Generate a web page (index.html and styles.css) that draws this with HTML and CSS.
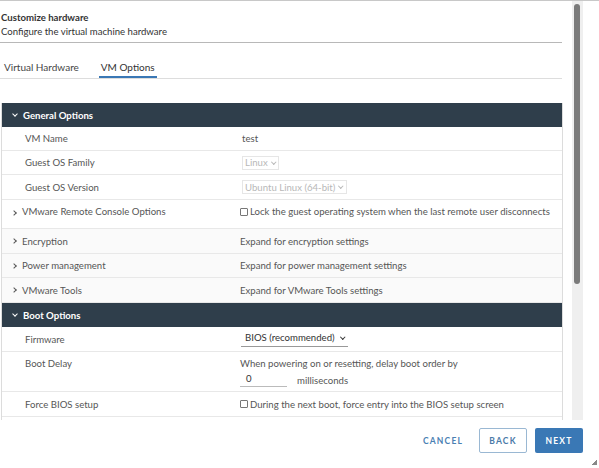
FILE: index.html
```html
<!DOCTYPE html>
<html>
<head>
<meta charset="utf-8">
<link rel="stylesheet" href="styles.css">
</head>
<body>
<div class="dialog">
  <div class="main">
    <div class="content">
      <div class="head">
        <div class="title">Customize hardware</div>
        <div class="subtitle">Configure the virtual machine hardware</div>
      </div>
      <div class="tabs">
        <div class="tab">Virtual Hardware</div>
        <div class="tab active">VM Options</div>
      </div>
      <div class="table">
        <div class="row section"><span class="chev down"></span>General Options</div>
        <div class="row h24"><div class="label sub">VM Name</div><div class="value"><span class="txt">test</span></div></div>
        <div class="row h24"><div class="label sub">Guest OS Family</div><div class="value"><span class="sel dis">Linux <span class="caret"></span></span></div></div>
        <div class="row h25"><div class="label sub">Guest OS Version</div><div class="value"><span class="sel dis">Ubuntu Linux (64-bit) <span class="caret"></span></span></div></div>
        <div class="row h29 top"><div class="label"><span class="chev right"></span>VMware Remote Console Options</div><div class="value"><span class="cb"></span>Lock the guest operating system when the last remote user disconnects</div></div>
        <div class="row h25 alt"><div class="label"><span class="chev right"></span>Encryption</div><div class="value">Expand for encryption settings</div></div>
        <div class="row h24 alt"><div class="label"><span class="chev right"></span>Power management</div><div class="value">Expand for power management settings</div></div>
        <div class="row h25 alt"><div class="label"><span class="chev right"></span>VMware Tools</div><div class="value">Expand for VMware Tools settings</div></div>
        <div class="row section"><span class="chev down"></span>Boot Options</div>
        <div class="row h25"><div class="label sub">Firmware</div><div class="value"><span class="sel line">BIOS (recommended) <span class="caret dark"></span></span></div></div>
        <div class="row delay"><div class="label sub">Boot Delay</div><div class="value col"><div>When powering on or resetting, delay boot order by</div><div class="ms"><span class="num">0</span><span>milliseconds</span></div></div></div>
        <div class="row h25"><div class="label sub">Force BIOS setup</div><div class="value"><span class="cb"></span>During the next boot, force entry into the BIOS setup screen</div></div>
        <div class="row h4"></div>
      </div>
    </div>
    <div class="track"><div class="thumb"></div></div>
  </div>
  <div class="footer">
    <div class="btn link">CANCEL</div>
    <div class="btn outline">BACK</div>
    <div class="btn primary">NEXT</div>
    <div class="grip"></div>
  </div>
</div>
</body>
</html>
```
FILE: styles.css
```css
* { box-sizing: border-box; }
html, body { margin: 0; padding: 0; background: #fff; }
body {
  font-family: Lato, "Open Sans", sans-serif;
  font-size: 9.6px;
  color: #565656;
  width: 599px;
  height: 468px;
  overflow: hidden;
}
.dialog { width: 599px; height: 468px; display: flex; flex-direction: column; border-top: 1px solid #c8c8c8; }
.main { display: flex; height: 419px; }
.content { width: 563px; overflow: hidden; }
.head { margin-right: 1px; border-bottom: 1px solid #b8b8b8; padding: 10px 0 4px 1px; height: 42px; }
.title { font-weight: bold; color: #333; line-height: 13px; }
.subtitle { color: #333; line-height: 15px; }
.tabs { display: flex; margin-top: 15px; border-bottom: 1px solid #ddd; height: 21px; margin-right: 1px; }
.tab { padding: 3px 0 0 4px; line-height: 12px; color: #454545; font-size: 10px; }
.tab.active { margin-left: 20px; padding: 3px 2px 0 2px; border-bottom: 2px solid #3a78b5; height: 20px; color: #333; }
.table { margin-top: 24px; margin-left: 1px; border: 1px solid #dcdcdc; border-bottom: none; border-top: none; }
.row { display: flex; align-items: center; border-bottom: 1px solid #e8e8e8; }
.row.section { background: #2f3e4b; color: #fff; font-weight: bold; height: 24px; padding-left: 9px; border-bottom: none; }
.h24 { height: 24px; }
.h25 { height: 25px; }
.h29 { height: 29px; }
.row.top { align-items: flex-start; padding-top: 6px; }
.h4 { height: 4px; border-bottom: none; }
.row.alt { background: #fafafa; }
.row.delay { height: 40px; align-items: flex-start; padding-top: 6px; }
.label { width: 238px; flex-shrink: 0; display: flex; align-items: center; padding-left: 9px; }
.label.sub { padding-left: 23px; }
.value { display: flex; align-items: center; }
.txt { margin-left: 2px; }
.value.col { flex-direction: column; align-items: flex-start; }
.chev { display: inline-block; width: 4px; height: 4px; border-right: 1px solid currentColor; border-bottom: 1px solid currentColor; margin-right: 6px; }
.chev.down { transform: rotate(45deg); margin-top: -3px; margin-left: 2px; }
.chev.right { transform: rotate(-45deg); margin-left: 1px; margin-right: 6px; }
.row.top .chev.right { margin-top: 2px; }
.sel { display: inline-flex; align-items: center; height: 14px; margin-left: 2px; }
.sel.dis { color: #b8b8b8; border: 1px solid #e6e6e6; padding: 0 3px 0 2px; }
.sel.line { color: #333; border-bottom: 1px solid #999; padding: 0 4px 2px 4px; height: 15px; margin-left: 1px; }
.caret { display: inline-block; width: 3.5px; height: 3.5px; border-right: 1px solid currentColor; border-bottom: 1px solid currentColor; transform: rotate(45deg); margin: -2px 0 0 4px; }
.caret.dark { margin-left: 6px; }
.cb { display: inline-block; width: 8px; height: 8px; border: 1px solid #777; border-radius: 1px; margin-right: 2px; flex-shrink: 0; }
.ms { display: flex; align-items: center; margin-top: 4px; }
.num { width: 47px; border-bottom: 1px solid #bbb; padding: 0 0 2px 6px; margin-right: 10px; color: #333; }
.track { width: 11px; margin-left: 9px; background: #efefef; position: relative; }
.thumb { margin: 3px 3px 0 2px; height: 280px; background: #7b7b7b; border-radius: 3px; }
.footer { flex: 1; display: flex; align-items: flex-start; padding-top: 8px; padding-right: 16px; justify-content: flex-end; position: relative; }
.btn { height: 25px; display: flex; align-items: center; justify-content: center; font-weight: bold; letter-spacing: 1.2px; font-size: 8.5px; border-radius: 2px; }
.btn.link { color: #4a80b3; width: 48px; margin-right: 12px; }
.btn.outline { width: 48px; border: 1px solid #9ab8d3; color: #4a7aa8; margin-right: 8px; }
.btn.primary { width: 48px; background: #3a78b5; color: #fff; }
.grip { position: absolute; right: 2px; bottom: 3px; width: 5px; height: 5px; background: linear-gradient(135deg, transparent 50%, #888 50%); }
```
